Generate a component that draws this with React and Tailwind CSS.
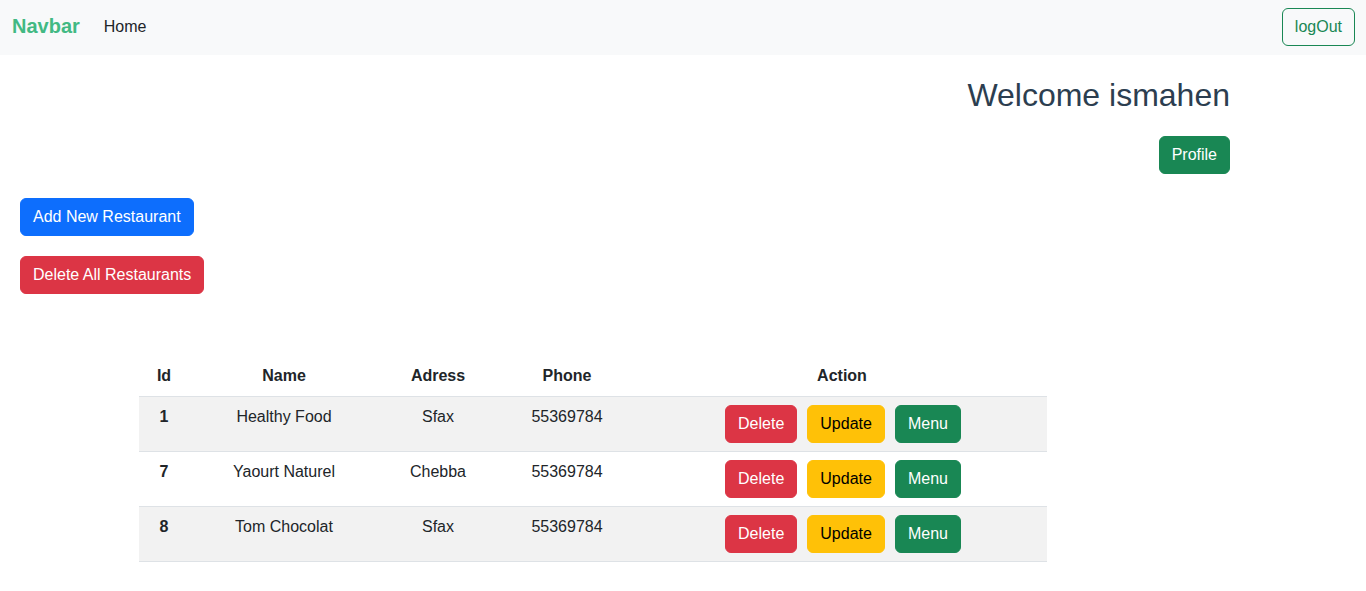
const rows = [
  { id: 1, name: "Healthy Food", adress: "Sfax", phone: "55369784" },
  { id: 7, name: "Yaourt Naturel", adress: "Chebba", phone: "55369784" },
  { id: 8, name: "Tom Chocolat", adress: "Sfax", phone: "55369784" },
];

function Btn({ children, className = "" }) {
  return (
    <button
      className={`h-[38px] rounded-[6px] border px-3 text-[16px] leading-6 ${className}`}
    >
      {children}
    </button>
  );
}

export default function App() {
  return (
    <div className="min-h-[591px] bg-white font-['Liberation_Sans',Arial,sans-serif] text-[16px] text-[#212529]">
      <nav className="flex h-[55px] items-center bg-[#f8f9fa] pb-[1px] pl-3 pr-[11px]">
        <span className="mb-[2px] text-[20px] font-bold text-[#42b983]">Navbar</span>
        <a className="ml-6 text-[#212529]">Home</a>
        <Btn className="ml-auto border-[#198754] text-[#198754]">logOut</Btn>
      </nav>

      <div className="flex flex-col items-end pr-[136px]">
        <h1 className="mt-[21px] text-[32px] leading-[38px] text-[#2c3e50]">
          Welcome ismahen
        </h1>
        <Btn className="mt-[22px] border-[#198754] bg-[#198754] text-white">
          Profile
        </Btn>
      </div>

      <div className="flex flex-col items-start gap-5 pl-5 pt-6">
        <Btn className="border-[#0d6efd] bg-[#0d6efd] text-white">
          Add New Restaurant
        </Btn>
        <Btn className="border-[#dc3545] bg-[#dc3545] text-white">
          Delete All Restaurants
        </Btn>
      </div>

      <table className="ml-[139px] mt-[62px] w-[908px] table-fixed border-collapse text-center">
        <thead>
          <tr className="border-b border-[#dee2e6]">
            <th className="w-[50px] px-2 py-2 font-bold">Id</th>
            <th className="w-[190px] px-2 py-2 font-bold">Name</th>
            <th className="w-[118px] px-2 py-2 font-bold">Adress</th>
            <th className="w-[140px] px-2 py-2 font-bold">Phone</th>
            <th className="w-[410px] px-2 py-2 font-bold">Action</th>
          </tr>
        </thead>
        <tbody>
          {rows.map((r, i) => (
            <tr
              key={r.id}
              className={`border-b border-[#dee2e6] ${i % 2 === 0 ? "bg-[#f2f2f2]" : "bg-white"}`}
            >
              <td className="px-2 py-2 align-top font-bold">{r.id}</td>
              <td className="px-2 py-2 align-top">{r.name}</td>
              <td className="px-2 py-2 align-top">{r.adress}</td>
              <td className="px-2 py-2 align-top">{r.phone}</td>
              <td className="py-2 pl-[10px] pr-2 align-top">
                <div className="flex justify-center gap-[10px]">
                  <Btn className="border-[#dc3545] bg-[#dc3545] text-white">Delete</Btn>
                  <Btn className="border-[#ffc107] bg-[#ffc107] text-black">Update</Btn>
                  <Btn className="border-[#198754] bg-[#198754] text-white">Menu</Btn>
                </div>
              </td>
            </tr>
          ))}
        </tbody>
      </table>
    </div>
  );
}
